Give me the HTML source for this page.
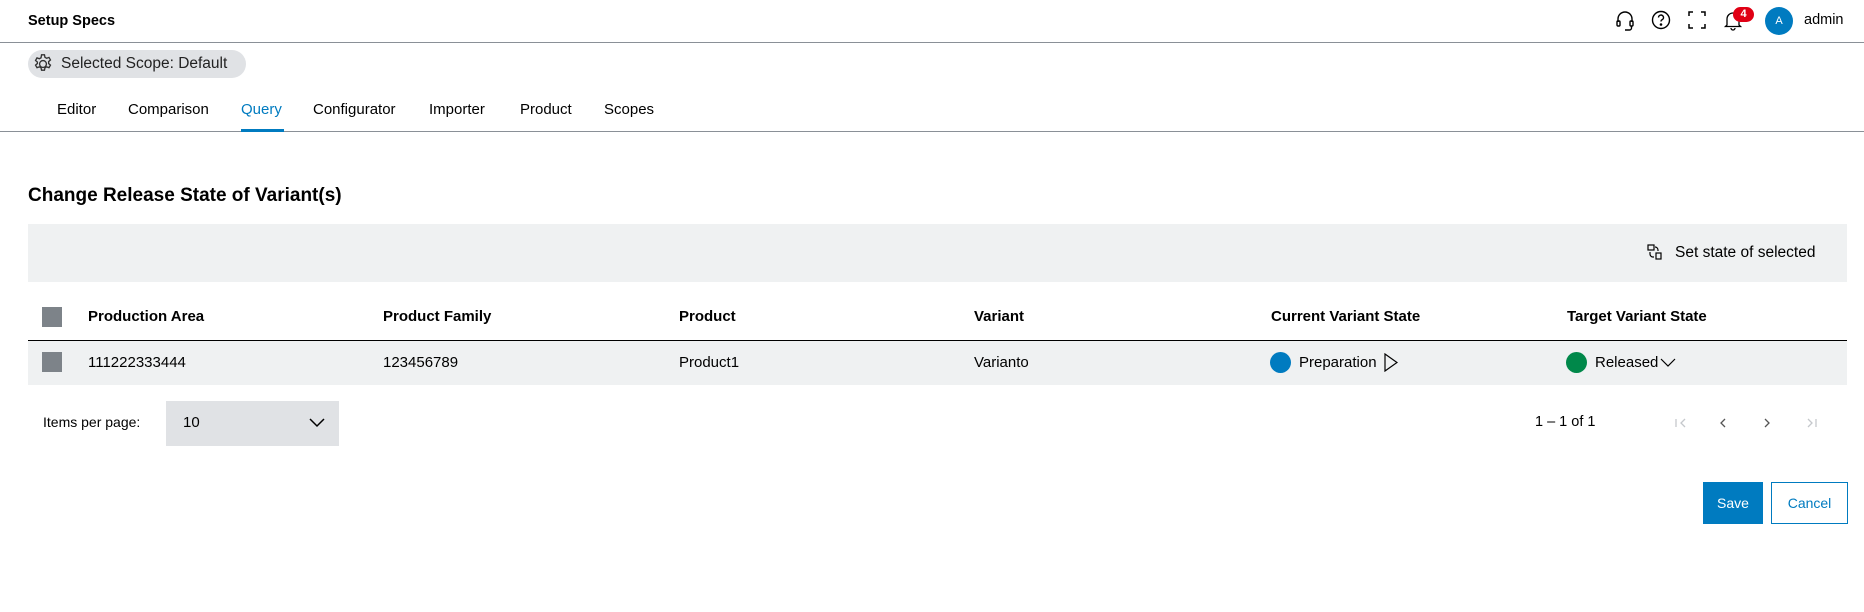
<!DOCTYPE html>
<html><head><meta charset="utf-8"><style>
*{box-sizing:border-box;margin:0;padding:0}
body{width:1864px;height:612px;background:#fff;font-family:"Liberation Sans",sans-serif;color:#000;position:relative;overflow:hidden;font-size:15px}
.a{position:absolute;white-space:nowrap}
.b{font-weight:bold}
</style></head><body>
<div class="a b" style="left:28px;top:13px;font-size:14.5px">Setup Specs</div>
<div class="a" style="left:0;top:42px;width:1864px;height:1px;background:#8a9097"></div>
<svg class="a" style="left:1614px;top:10px" width="22" height="22" viewBox="0 0 22 22" fill="none" stroke="#000" stroke-width="1.4"><path d="M4 12V9a7 7 0 0 1 14 0v3"/><rect x="3" y="11" width="3" height="5" rx="1"/><rect x="16" y="11" width="3" height="5" rx="1"/><path d="M17.5 16v2a2 2 0 0 1-2 2H11"/></svg>
<svg class="a" style="left:1650px;top:9px" width="22" height="22" viewBox="0 0 22 22" fill="none" stroke="#000" stroke-width="1.4"><circle cx="11" cy="11" r="8.5"/><path d="M8.5 8.5a2.5 2.5 0 1 1 3.5 2.3c-.8.4-1 .9-1 1.7"/><circle cx="11" cy="15.5" r=".6" fill="#000"/></svg>
<svg class="a" style="left:1688px;top:11px" width="18" height="18" viewBox="0 0 18 18" fill="none" stroke="#000" stroke-width="1.5"><path d="M1 5V1h4M13 1h4v4M17 13v4h-4M5 17H1v-4"/></svg>
<svg class="a" style="left:1722px;top:9px" width="22" height="22" viewBox="0 0 22 22" fill="none" stroke="#000" stroke-width="1.3"><path d="M5 16V10a6 6 0 0 1 12 0v6l1.5 1.5h-15z"/><path d="M9 19a2 2 0 0 0 4 0"/></svg>
<div class="a b" style="left:1733px;top:7px;width:21px;height:15px;border-radius:8px;background:#e00015;color:#fff;font-size:11px;text-align:center;line-height:15px">4</div>
<div class="a" style="left:1765px;top:7px;width:28px;height:28px;border-radius:50%;background:#007bc0;color:#fff;font-size:11px;text-align:center;line-height:28px">A</div>
<div class="a" style="left:1804px;top:12px;font-size:14.5px">admin</div>
<div class="a" style="left:28px;top:50px;width:218px;height:28px;border-radius:14px;background:#e0e2e5"></div>
<svg class="a" style="left:32px;top:53px" width="22" height="22" viewBox="0 0 18 18" fill="none" stroke="#333" stroke-width="1.1"><circle cx="9" cy="9" r="2.8"/><path d="M7.8 1.5h2.4l.4 2 1.4.8 1.9-.7 1.2 2.1-1.5 1.3v1.6l1.5 1.3-1.2 2.1-1.9-.7-1.4.8-.4 2H7.8l-.4-2-1.4-.8-1.9.7-1.2-2.1 1.5-1.3V7.4L2.9 6.1l1.2-2.1 1.9.7 1.4-.8z"/></svg>
<div class="a" style="left:61px;top:55px;font-size:15.5px;color:#222">Selected Scope: Default</div>
<div class="a" style="left:57px;top:101px;font-size:15px">Editor</div>
<div class="a" style="left:128px;top:101px;font-size:15px">Comparison</div>
<div class="a" style="left:241px;top:101px;font-size:15px;color:#007bc0">Query</div>
<div class="a" style="left:313px;top:101px;font-size:15px">Configurator</div>
<div class="a" style="left:429px;top:101px;font-size:15px">Importer</div>
<div class="a" style="left:520px;top:101px;font-size:15px">Product</div>
<div class="a" style="left:604px;top:101px;font-size:15px">Scopes</div>
<div class="a" style="left:0;top:131px;width:1864px;height:1px;background:#8a9097"></div>
<div class="a" style="left:241px;top:129px;width:43px;height:3px;background:#007bc0"></div>
<div class="a b" style="left:28px;top:185px;font-size:19px">Change Release State of Variant(s)</div>
<div class="a" style="left:28px;top:224px;width:1819px;height:58px;background:#eff1f2"></div>
<svg class="a" style="left:1647px;top:244px" width="16" height="17" viewBox="0 0 16 17" fill="none" stroke="#000" stroke-width="1.2"><rect x="1" y="1" width="6" height="5"/><rect x="9" y="9" width="5" height="6"/><path d="M3 8v2a3 3 0 0 0 3 3h1M11 7V6a3 3 0 0 0-3-3"/></svg>
<div class="a" style="left:1675px;top:244px;font-size:15.5px">Set state of selected</div>
<div class="a" style="left:42px;top:307px;width:20px;height:20px;background:#7d8389"></div>
<div class="a b" style="left:88px;top:308px;font-size:15px">Production Area</div>
<div class="a b" style="left:383px;top:308px;font-size:15px">Product Family</div>
<div class="a b" style="left:679px;top:308px;font-size:15px">Product</div>
<div class="a b" style="left:974px;top:308px;font-size:15px">Variant</div>
<div class="a b" style="left:1271px;top:308px;font-size:15px">Current Variant State</div>
<div class="a b" style="left:1567px;top:308px;font-size:15px">Target Variant State</div>
<div class="a" style="left:28px;top:340px;width:1819px;height:45px;background:#eff1f2;border-top:1.5px solid #000"></div>
<div class="a" style="left:42px;top:352px;width:20px;height:20px;background:#7d8389"></div>
<div class="a" style="left:88px;top:354px;font-size:15px">111222333444</div>
<div class="a" style="left:383px;top:354px;font-size:15px">123456789</div>
<div class="a" style="left:679px;top:354px;font-size:15px">Product1</div>
<div class="a" style="left:974px;top:354px;font-size:15px">Varianto</div>
<div class="a" style="left:1270px;top:352px;width:21px;height:21px;border-radius:50%;background:#007bc0"></div>
<div class="a" style="left:1299px;top:354px;font-size:15px">Preparation</div>
<svg class="a" style="left:1384px;top:353px" width="14" height="19" viewBox="0 0 14 19" fill="none" stroke="#000" stroke-width="1.2"><path d="M1 1v17l12-8.5z"/></svg>
<div class="a" style="left:1566px;top:352px;width:21px;height:21px;border-radius:50%;background:#00884a"></div>
<div class="a" style="left:1595px;top:354px;font-size:15px">Released</div>
<svg class="a" style="left:1660px;top:358px" width="16" height="10" viewBox="0 0 16 10" fill="none" stroke="#000" stroke-width="1.2"><path d="M1 1l7 7 7-7"/></svg>
<div class="a" style="left:43px;top:414px;font-size:14px">Items per page:</div>
<div class="a" style="left:166px;top:401px;width:173px;height:45px;background:#e0e2e5"></div>
<div class="a" style="left:183px;top:414px;font-size:15px">10</div>
<svg class="a" style="left:309px;top:418px" width="16" height="10" viewBox="0 0 16 10" fill="none" stroke="#000" stroke-width="1.5"><path d="M1 1l7 7 7-7"/></svg>
<div class="a" style="left:1535px;top:414px;font-size:14.5px">1 – 1 of 1</div>
<svg class="a" style="left:1674px;top:416px" width="160" height="14" viewBox="0 0 160 14" fill="none" stroke-width="1.3"><path d="M2 3v8M11 3l-4 4 4 4" stroke="#c5c8cc"/><path d="M51 3l-4 4 4 4" stroke="#555"/><path d="M91 3l4 4-4 4" stroke="#555"/><path d="M134 3l4 4-4 4M142 3v8" stroke="#c5c8cc"/></svg>
<div class="a" style="left:1703px;top:482px;width:60px;height:42px;background:#007bc0;color:#fff;font-size:14px;text-align:center;line-height:42px">Save</div>
<div class="a" style="left:1771px;top:482px;width:77px;height:42px;border:1px solid #007bc0;color:#007bc0;font-size:14px;text-align:center;line-height:40px">Cancel</div>
</body></html>
